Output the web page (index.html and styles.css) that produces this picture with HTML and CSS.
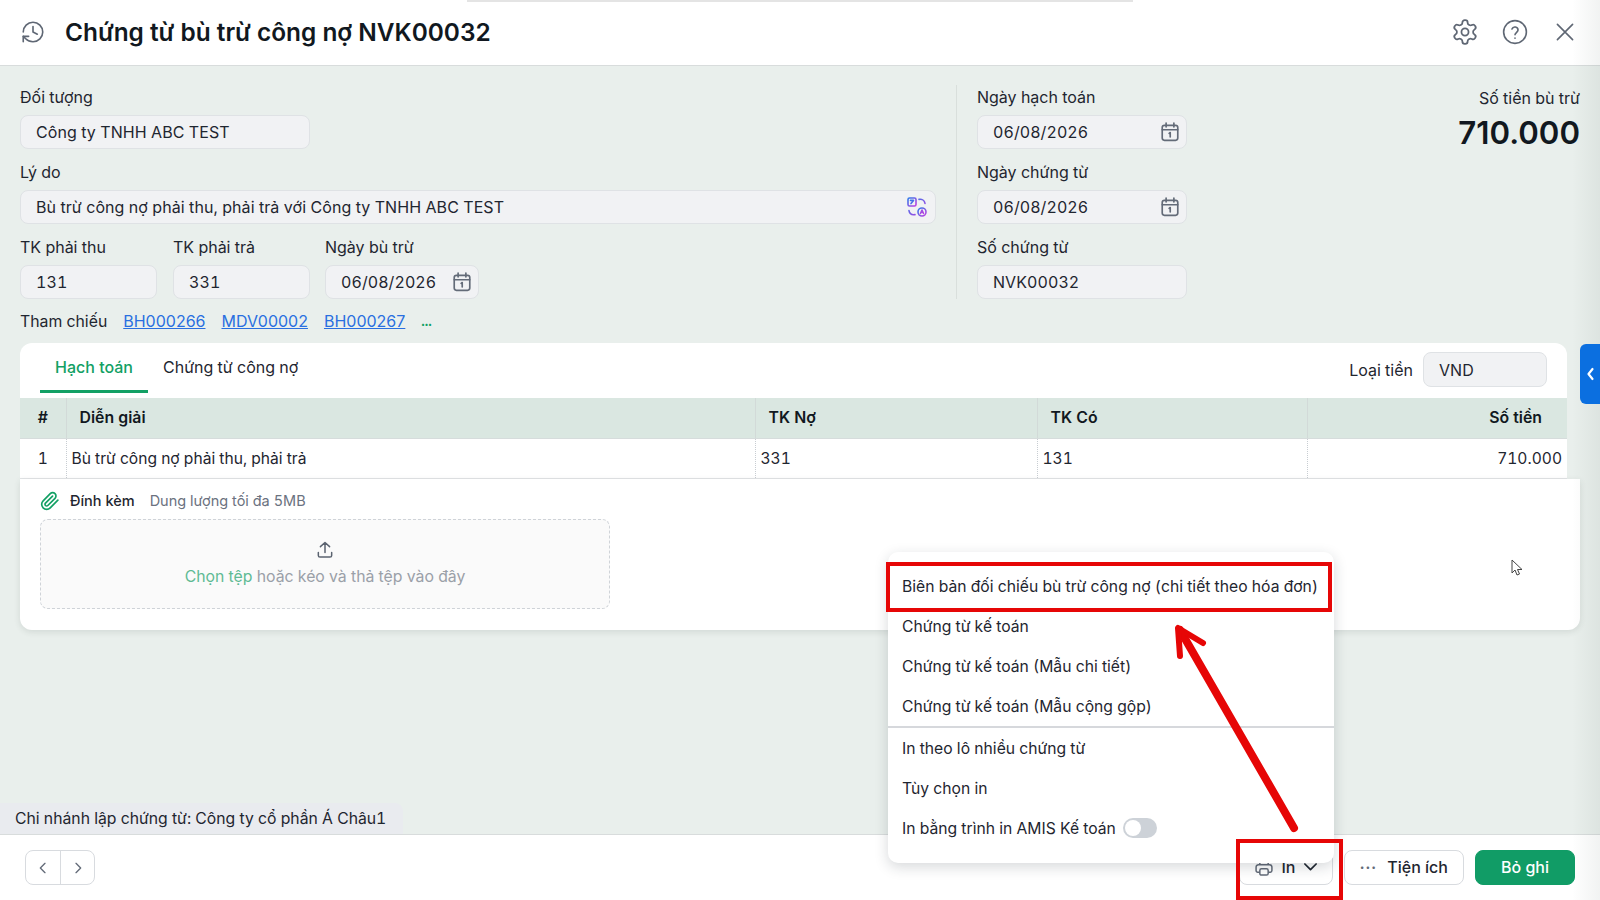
FILE: index.html
```html
<!DOCTYPE html>
<html lang="vi">
<head>
    <meta charset="UTF-8">
    <title>Chứng từ bù trừ công nợ NVK00032</title>
    <link rel="stylesheet" href="styles.css">
</head>
<body>
    <div class="top-strip"></div>

    <header class="page-header">
        <svg class="icon history-icon" viewBox="0 0 24 24"><path d="M3 12a9 9 0 1 1 9 9 9.75 9.75 0 0 1-6.74-2.74L3 16"/><path d="M3 21v-5h5"/><path d="M12 7v5l4 2"/></svg>
        <h1>Chứng từ bù trừ công nợ NVK00032</h1>
        <div class="header-actions">
            <svg class="icon" viewBox="1 1 22 22"><path d="M12.22 2h-.44a2 2 0 0 0-2 2v.18a2 2 0 0 1-1 1.73l-.43.25a2 2 0 0 1-2 0l-.15-.08a2 2 0 0 0-2.73.73l-.22.38a2 2 0 0 0 .73 2.73l.15.1a2 2 0 0 1 1 1.72v.51a2 2 0 0 1-1 1.74l-.15.09a2 2 0 0 0-.73 2.73l.22.38a2 2 0 0 0 2.73.73l.15-.08a2 2 0 0 1 2 0l.43.25a2 2 0 0 1 1 1.73V20a2 2 0 0 0 2 2h.44a2 2 0 0 0 2-2v-.18a2 2 0 0 1 1-1.73l.43-.25a2 2 0 0 1 2 0l.15.08a2 2 0 0 0 2.73-.73l.22-.39a2 2 0 0 0-.73-2.73l-.15-.08a2 2 0 0 1-1-1.74v-.5a2 2 0 0 1 1-1.74l.15-.09a2 2 0 0 0 .73-2.73l-.22-.38a2 2 0 0 0-2.73-.73l-.15.08a2 2 0 0 1-2 0l-.43-.25a2 2 0 0 1-1-1.73V4a2 2 0 0 0-2-2z"/><circle cx="12" cy="12" r="3"/></svg>
            <svg class="icon" viewBox="0 0 24 24"><circle cx="12" cy="12" r="10.5"/><path d="M9.2 9.2a2.9 2.9 0 0 1 5.6 1c0 2-2.8 2.6-2.8 4.3"/><path d="M12 17.6v.2"/></svg>
            <svg class="icon" viewBox="0 0 24 24"><path d="M5 5l14 14M19 5L5 19"/></svg>
        </div>
    </header>

    <main class="page-main">
        <section class="form-area">
            <div class="form-left">
                <div class="field">
                    <label>Đối tượng</label>
                    <div class="input input-object">Công ty TNHH ABC TEST</div>
                </div>
                <div class="field">
                    <label>Lý do</label>
                    <div class="input">
                        <span>Bù trừ công nợ phải thu, phải trả với Công ty TNHH ABC TEST</span>
                        <svg class="translate-icon" viewBox="0 0 20 20">
                            <defs><linearGradient id="tg" x1="0" y1="0" x2="1" y2="1"><stop offset="0" stop-color="#2f7bea"/><stop offset="1" stop-color="#c23fe0"/></linearGradient></defs>
                            <rect x="1" y="1" width="8" height="8" rx="1.5"/><rect x="11" y="11" width="8" height="8" rx="4"/>
                            <path d="M3.5 3.4h3L4 6.6M12 2.4c3-.5 5.5 1 6 4M8 17.6c-3 .5-5.5-1-6-4M13.5 16.5l1.5-3.4 1.5 3.4"/>
                        </svg>
                    </div>
                </div>
                <div class="field-row">
                    <div class="field field-account">
                        <label>TK phải thu</label>
                        <div class="input">131</div>
                    </div>
                    <div class="field field-account">
                        <label>TK phải trả</label>
                        <div class="input">331</div>
                    </div>
                    <div class="field field-date">
                        <label>Ngày bù trừ</label>
                        <div class="input">
                            <span>06/08/2026</span>
                            <svg class="icon-calendar" viewBox="0 0 18 18"><rect x="2" y="3" width="14" height="13.5" rx="2"/><path d="M5.5 1v3.5M12.5 1v3.5M2 7h14M8.2 10.2l1-.7v4"/></svg>
                        </div>
                    </div>
                </div>
            </div>

            <div class="form-right">
                <div class="field">
                    <label>Ngày hạch toán</label>
                    <div class="input">
                        <span>06/08/2026</span>
                        <svg class="icon-calendar" viewBox="0 0 18 18"><rect x="2" y="3" width="14" height="13.5" rx="2"/><path d="M5.5 1v3.5M12.5 1v3.5M2 7h14M8.2 10.2l1-.7v4"/></svg>
                    </div>
                </div>
                <div class="field">
                    <label>Ngày chứng từ</label>
                    <div class="input">
                        <span>06/08/2026</span>
                        <svg class="icon-calendar" viewBox="0 0 18 18"><rect x="2" y="3" width="14" height="13.5" rx="2"/><path d="M5.5 1v3.5M12.5 1v3.5M2 7h14M8.2 10.2l1-.7v4"/></svg>
                    </div>
                </div>
                <div class="field">
                    <label>Số chứng từ</label>
                    <div class="input">NVK00032</div>
                </div>
            </div>

            <div class="amount">
                <div class="amount-label">Số tiền bù trừ</div>
                <div class="amount-value">710.000</div>
            </div>
        </section>

        <div class="refs">
            <span class="refs-label">Tham chiếu</span>
            <a href="#">BH000266</a>
            <a href="#">MDV00002</a>
            <a href="#">BH000267</a>
            <span class="refs-more">...</span>
        </div>

        <section class="card">
            <div class="tabs">
                <div class="tab tab-active">Hạch toán</div>
                <div class="tab">Chứng từ công nợ</div>
                <div class="currency">
                    <span>Loại tiền</span>
                    <div class="input currency-input">VND</div>
                </div>
            </div>
            <table class="grid">
                <thead>
                    <tr>
                        <th class="col-index">#</th>
                        <th class="col-desc">Diễn giải</th>
                        <th class="col-debit">TK Nợ</th>
                        <th class="col-credit">TK Có</th>
                        <th class="col-amount">Số tiền</th>
                    </tr>
                </thead>
                <tbody>
                    <tr>
                        <td class="col-index">1</td>
                        <td>Bù trừ công nợ phải thu, phải trả</td>
                        <td>331</td>
                        <td>131</td>
                        <td class="col-amount">710.000</td>
                    </tr>
                </tbody>
            </table>
            <div class="attach">
                <div class="attach-head">
                    <svg class="clip-icon" viewBox="0 0 24 24"><path d="m21.44 11.05-9.19 9.19a6 6 0 0 1-8.49-8.49l8.57-8.57A4 4 0 1 1 18 8.84l-8.59 8.57a2 2 0 0 1-2.83-2.83l8.49-8.48"/></svg>
                    <span class="attach-title">Đính kèm</span>
                    <span class="attach-note">Dung lượng tối đa 5MB</span>
                </div>
                <div class="dropzone">
                    <svg class="upload-icon" viewBox="0 0 24 24"><path d="M12 15V3M6.5 8 12 3l5.500 5M4 15v3.500a2 2 0 0 0 2 2h12a2 2 0 0 0 2-2V15"/></svg>
                    <div><span class="dropzone-pick">Chọn tệp</span> hoặc kéo và thả tệp vào đây</div>
                </div>
            </div>
        </section>

        <div class="branch">Chi nhánh lập chứng từ: Công ty cổ phần Á Châu1</div>
    </main>

    <footer class="page-footer">
        <div class="pager">
            <button class="pager-btn"><svg viewBox="0 0 24 24"><path d="M15 5l-7 7 7 7"/></svg></button>
            <button class="pager-btn"><svg viewBox="0 0 24 24"><path d="M9 5l7 7-7 7"/></svg></button>
        </div>
        <div class="footer-actions">
            <button class="btn btn-print">
                <svg class="printer-icon" viewBox="0 0 24 24"><path d="M7 8V5.500A1.500 1.500 0 0 1 8.500 4h7A1.500 1.500 0 0 1 17 5.500V8"/><path d="M7 17H4.500A2 2 0 0 1 2.500 15v-4a3 3 0 0 1 3-3h13a3 3 0 0 1 3 3v4a2 2 0 0 1-2 2H17"/><rect x="7" y="13" width="10" height="7.500" rx="2"/></svg>
                <span>In</span>
                <svg class="chevron-icon" viewBox="0 0 24 24"><path d="M3 8l9 9 9-9"/></svg>
            </button>
            <button class="btn btn-tools"><span class="dots">•••</span><span>Tiện ích</span></button>
            <button class="btn btn-save">Bỏ ghi</button>
        </div>
    </footer>

    <!-- menu mở từ nút In -->
    <div class="print-menu">
        <div class="menu-item">Biên bản đối chiếu bù trừ công nợ (chi tiết theo hóa đơn)</div>
        <div class="menu-item">Chứng từ kế toán</div>
        <div class="menu-item">Chứng từ kế toán (Mẫu chi tiết)</div>
        <div class="menu-item">Chứng từ kế toán (Mẫu cộng gộp)</div>
        <div class="menu-divider"></div>
        <div class="menu-item">In theo lô nhiều chứng từ</div>
        <div class="menu-item">Tùy chọn in</div>
        <div class="menu-item">In bằng trình in AMIS Kế toán <span class="toggle"><span class="toggle-knob"></span></span></div>
    </div>

    <div class="side-tab"><svg viewBox="0 0 12 20"><path d="M8.500 5l-4 5 4 5"/></svg></div>

    <!-- phần đánh dấu màu đỏ trên ảnh -->
    <div class="mark mark-menu"></div>
    <div class="mark mark-print"></div>
    <svg class="mark-arrow" viewBox="0 0 1600 900">
        <path d="M1294 828L1180 630"/>
        <path class="arrow-head" d="M1203 643L1178 628L1180 656"/>
    </svg>
    <svg class="cursor" viewBox="0 0 12 17"><path d="M1 1v13l3-3 2 5 2.500-1-2-4.500h4.500z"/></svg>
</body>
</html>
```

FILE: styles.css
```css
* {
    box-sizing: border-box;
}

body {
    margin: 0;
    width: 1600px;
    height: 900px;
    overflow: hidden;
    display: flex;
    flex-direction: column;
    position: relative;
    font-family: Inter, "Noto Sans", sans-serif;
    font-size: 16px;
    font-variant-numeric: tabular-nums;
    color: #1f2630;
    background-color: #e9efec;
}

/* bóng mờ ở mép phải */
body::before {
    content: "";
    position: absolute;
    top: 0;
    right: 0;
    width: 28px;
    height: 100%;
    background: linear-gradient(to right, rgba(60, 80, 70, 0), rgba(60, 80, 70, 0.07));
}

.top-strip {
    position: absolute;
    top: 0;
    left: 467px;
    width: 666px;
    height: 2px;
    background-color: #e4e4e4;
}

.icon {
    width: 26px;
    height: 26px;
    fill: none;
    stroke: #5f6774;
    stroke-width: 1.5;
    stroke-linecap: round;
    stroke-linejoin: round;
}

/* header */
.page-header {
    height: 66px;
    flex-shrink: 0;
    display: flex;
    align-items: center;
    padding: 0 22px 2px 20px;
    background-color: #ffffff;
    border-bottom: 1px solid #d8dcdc;
}

.page-header h1 {
    margin: 0 0 0 19px;
    font-size: 24.4px;
    font-weight: 600;
    font-variant-numeric: normal;
    color: #111820;
}

.header-actions {
    margin-left: auto;
    display: flex;
    gap: 24px;
}

/* main */
.page-main {
    flex: 1;
    display: flex;
    flex-direction: column;
    min-height: 0;
}

.form-area {
    display: flex;
    padding: 21px 20px 0 20px;
}

.form-left {
    width: 916px;
}

.form-right {
    margin-left: 20px;
    padding-left: 20px;
    width: 231px;
    height: 214px;
    margin-top: -2px;
    padding-top: 2px;
    border-left: 1px solid #d9dfdc;
}

.amount {
    margin-left: auto;
    text-align: right;
}

.amount-label {
    line-height: 20px;
    margin-top: 1px;
}

.amount-value {
    margin-top: 5px;
    font-size: 31.2px;
    line-height: 40px;
    font-weight: 600;
    font-variant-numeric: normal;
    color: #111820;
}

.field {
    margin-bottom: 13px;
}

.field label {
    display: block;
    line-height: 20px;
    margin-bottom: 8px;
}

.input {
    height: 34px;
    display: flex;
    align-items: center;
    justify-content: space-between;
    padding: 0 6px 0 15px;
    letter-spacing: 0.07px;
    background-color: #f1f2f4;
    border: 1px solid #dfe2e5;
    border-radius: 8px;
}

.input-object {
    width: 290px;
}

.field-row {
    display: flex;
    gap: 16px;
}

.field-account {
    width: 137px;
}

.field-date {
    width: 154px;
    margin-left: -1px;
}

.icon-calendar {
    width: 20px;
    height: 20px;
    fill: none;
    stroke: #636b78;
    stroke-width: 1.5;
    stroke-linecap: round;
    stroke-linejoin: round;
}

.translate-icon {
    width: 20px;
    height: 20px;
    margin-right: 2px;
    fill: none;
    stroke: url(#tg);
    stroke-width: 1.600;
    stroke-linecap: round;
    stroke-linejoin: round;
}

.refs {
    display: flex;
    align-items: center;
    gap: 16px;
    height: 20px;
    padding-left: 20px;
    margin-top: -1px;
}

.refs-label {
    font-size: 15.8px;
}

.refs a {
    color: #2a6fe0;
    font-variant-numeric: normal;
}

.refs-more {
    color: #12a064;
    font-size: 13px;
    font-weight: 700;
}

/* card */
.card {
    margin: 12px 0 0 20px;
    width: 1560px;
    height: 287px;
}

.tabs {
    width: 1547px;
    height: 55px;
    display: flex;
    align-items: flex-start;
    padding: 0 20px;
    background-color: #ffffff;
    border-radius: 12px 12px 0 0;
}

.tab {
    height: 50px;
    line-height: 49px;
    padding: 0 15px;
}

.tab-active {
    color: #12a064;
    font-weight: 500;
    border-bottom: 3px solid #12a064;
}

.currency {
    margin: 9px 0 0 auto;
    display: flex;
    align-items: center;
    gap: 10px;
}

.currency-input {
    width: 124px;
    height: 35px;
}

.grid {
    width: 1547px;
    border-collapse: collapse;
    table-layout: fixed;
    background-color: #ffffff;
}

.grid th {
    height: 40px;
    padding: 0 0 0 13px;
    text-align: left;
    font-size: 15.800px;
    font-weight: 600;
    background-color: #dae7e1;
    border-left: 1px solid #d2dad8;
    border-bottom: 1px solid #d6dcdc;
    color: #111820;
}

.grid td {
    height: 40px;
    padding: 0 0 0 5px;
    font-size: 15.600px;
    border-left: 1px dotted #c8cdd2;
    border-bottom: 1px solid #e2e4e6;
}

.grid .col-index {
    width: 46px;
    padding: 0;
    text-align: center;
    border-left: none;
}

.col-desc {
    width: 689px;
}

.col-debit {
    width: 282px;
}

.col-credit {
    width: 270px;
}

.grid th.col-amount {
    text-align: right;
    padding-right: 25px;
}

.grid td.col-amount {
    text-align: right;
    padding-right: 5px;
}

.attach {
    height: 151px;
    padding: 12px 0 0 20px;
    background-color: #ffffff;
    border-radius: 0 0 12px 12px;
    box-shadow: 0 2px 6px rgba(40, 60, 50, 0.12);
}

.attach-head {
    display: flex;
    align-items: center;
    height: 20px;
    font-size: 14.500px;
}

.clip-icon {
    width: 20px;
    height: 20px;
    fill: none;
    stroke: #12a064;
    stroke-width: 2;
    stroke-linecap: round;
    stroke-linejoin: round;
}

.attach-title {
    margin-left: 10px;
    font-weight: 500;
}

.attach-note {
    margin-left: 15px;
    color: #6b7280;
}

.dropzone {
    width: 570px;
    height: 90px;
    margin-top: 8px;
    display: flex;
    flex-direction: column;
    align-items: center;
    padding-top: 20px;
    gap: 7px;
    font-size: 15.800px;
    color: #9aa0a8;
    background-color: #fafafa;
    border: 1px dashed #cfd3d8;
    border-radius: 8px;
}

.dropzone-pick {
    color: #5fba94;
}

.upload-icon {
    width: 20px;
    height: 20px;
    fill: none;
    stroke: #5b6370;
    stroke-width: 1.800;
    stroke-linecap: round;
    stroke-linejoin: round;
}

.branch {
    align-self: flex-start;
    width: 403px;
    height: 31px;
    margin-top: auto;
    line-height: 31px;
    padding-left: 15px;
    font-size: 15.750px;
    background-color: #e9ebef;
    border-radius: 0 8px 0 0;
    white-space: nowrap;
}

/* footer */
.page-footer {
    height: 66px;
    flex-shrink: 0;
    display: flex;
    align-items: flex-start;
    justify-content: space-between;
    padding: 15px 25px 0;
    background-color: #ffffff;
    border-top: 1px solid #d8dcdc;
}

.pager {
    display: flex;
    height: 35px;
    border: 1px solid #d8dbdf;
    border-radius: 8px;
}

.pager-btn {
    width: 34px;
    padding: 0;
    display: flex;
    align-items: center;
    justify-content: center;
    background: none;
    border: none;
}

.pager-btn + .pager-btn {
    border-left: 1px solid #d8dbdf;
}

.pager-btn svg {
    width: 16px;
    height: 16px;
    fill: none;
    stroke: #636b78;
    stroke-width: 2;
    stroke-linecap: round;
    stroke-linejoin: round;
}

.footer-actions {
    display: flex;
    gap: 11px;
}

.btn {
    height: 35px;
    display: flex;
    align-items: center;
    justify-content: center;
    padding: 0 0 2px;
    font-family: inherit;
    font-size: 16px;
    font-weight: 500;
    color: #1f2630;
    background-color: #ffffff;
    border: 1px solid #d8dbdf;
    border-radius: 8px;
}

.btn-print {
    width: 94px;
    gap: 8px;
}

.printer-icon {
    width: 20px;
    height: 20px;
    margin-top: 3px;
    fill: none;
    stroke: #636b78;
    stroke-width: 1.800;
    stroke-linejoin: round;
}

.chevron-icon {
    width: 15px;
    height: 15px;
    fill: none;
    stroke: #1f2630;
    stroke-width: 2.800;
    stroke-linecap: round;
    stroke-linejoin: round;
}

.btn-tools {
    width: 120px;
    gap: 10px;
}

.dots {
    font-size: 8px;
    letter-spacing: 1.500px;
    color: #636b78;
}

.btn-save {
    width: 100px;
    color: #ffffff;
    background-color: #119c66;
    border-color: #119c66;
}

/* menu in */
.print-menu {
    position: absolute;
    left: 888px;
    top: 552px;
    width: 446px;
    height: 311px;
    padding-top: 14px;
    font-size: 15.700px;
    background-color: #ffffff;
    border-radius: 10px;
    box-shadow: 0 4px 14px rgba(30, 40, 50, 0.18);
}

.menu-item {
    height: 40px;
    display: flex;
    align-items: center;
    padding-left: 14px;
    white-space: nowrap;
}

.menu-divider {
    height: 2px;
    background-color: #d6d8dc;
}

.toggle {
    width: 34px;
    height: 20px;
    margin-left: 7px;
    padding: 2px;
    background-color: #cdd2d8;
    border-radius: 10px;
}

.toggle-knob {
    display: block;
    width: 16px;
    height: 16px;
    background-color: #ffffff;
    border-radius: 50%;
}

.side-tab {
    position: absolute;
    top: 344px;
    right: 0;
    width: 20px;
    height: 60px;
    display: flex;
    align-items: center;
    padding-left: 4px;
    background-color: #0b6fe0;
    border-radius: 6px 0 0 6px;
}

.side-tab svg {
    width: 12px;
    height: 20px;
    fill: none;
    stroke: #ffffff;
    stroke-width: 2.200;
    stroke-linecap: round;
    stroke-linejoin: round;
}

/* đánh dấu */
.mark {
    position: absolute;
    border: 4px solid #e60606;
}

.mark-menu {
    left: 886px;
    top: 562px;
    width: 446px;
    height: 50px;
}

.mark-print {
    left: 1236px;
    top: 839px;
    width: 107px;
    height: 61px;
}

.mark-arrow {
    position: absolute;
    left: 0;
    top: 0;
    width: 1600px;
    height: 900px;
    fill: none;
    stroke: #e60606;
    stroke-width: 8;
    stroke-linecap: round;
    stroke-linejoin: round;
}

.arrow-head {
    stroke-width: 6;
}

.cursor {
    position: absolute;
    left: 1511px;
    top: 559px;
    width: 12px;
    height: 17px;
    fill: #ffffff;
    stroke: #444444;
    stroke-width: 1;
}
```
